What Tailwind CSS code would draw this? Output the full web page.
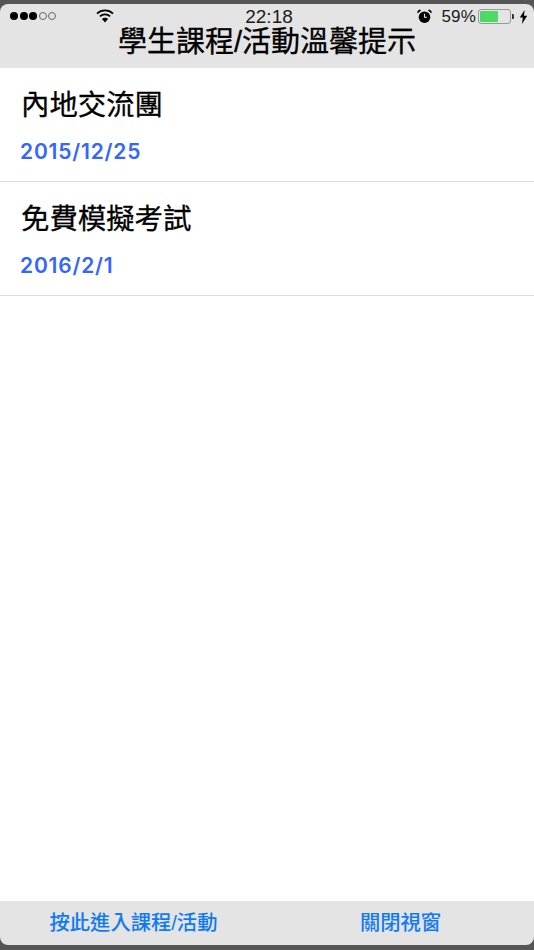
<!DOCTYPE html>
<html lang="zh-Hant">
<head>
<meta charset="utf-8">
<script src="https://cdn.jsdelivr.net/npm/@tailwindcss/browser@4"></script>
</head>
<body class="m-0">
<div class="w-[534px] h-[950px] bg-[#555555] flex flex-col pt-[4px] pb-[5px] overflow-hidden font-['Liberation_Sans','Noto_Sans_CJK_TC',sans-serif] text-black">
  <header class="h-[64px] bg-[#e4e4e4] rounded-t-[8px] flex flex-col shrink-0">
    <div class="h-[20px] grid grid-cols-3 items-center pl-[10px] pr-[6px] text-[17px] text-[#1a1a1a] shrink-0">
      <div class="flex items-center gap-[40px]">
        <div class="flex items-center gap-[1.5px] -mt-[1px]">
          <span class="w-[8px] h-[8px] rounded-full bg-black"></span>
          <span class="w-[8px] h-[8px] rounded-full bg-black"></span>
          <span class="w-[8px] h-[8px] rounded-full bg-black"></span>
          <span class="w-[8px] h-[8px] rounded-full border border-[#666]"></span>
          <span class="w-[8px] h-[8px] rounded-full border border-[#666]"></span>
        </div>
        <svg width="18" height="14" viewBox="0 0 18 14" fill="none" stroke="#000" stroke-width="1.8" class="-mt-[2px]">
          <path d="M1 4.6a11.5 11.5 0 0 1 16 0"/>
          <path d="M3.9 7.4a7.4 7.4 0 0 1 10.2 0"/>
          <path d="M9 13.5 5.9 10.1a4.4 4.4 0 0 1 6.2 0z" fill="#000" stroke="none"/>
        </svg>
      </div>
      <div class="text-center text-[19px] leading-[20px]">22:18</div>
      <div class="flex items-center justify-end gap-[4px]">
        <svg width="15" height="15" viewBox="0 0 15 15" class="mr-[5px] -mt-[1px]">
          <circle cx="7.5" cy="8.2" r="5.8" fill="#000"/>
          <path d="M.6 4.4 4.2 1.2 2.4.5.4 2.3zM14.4 4.4 10.8 1.2 12.6.5 14.6 2.3z" fill="#000"/>
          <path d="M7.5 4.8V8.3H10" fill="none" stroke="#e4e4e4" stroke-width="1.1"/>
        </svg>
        <span class="tracking-[0.2px]">59%</span>
        <div class="flex items-center gap-[1px] -ml-[2px]">
          <div class="w-[33px] h-[15px] border border-[#999] rounded-[3px] p-[1px]">
            <div class="w-[18px] h-full bg-[#4cd964] rounded-[1px]"></div>
          </div>
          <span class="w-[2px] h-[5px] bg-[#333] rounded-r-[1px]"></span>
        </div>
        <svg width="9" height="14" viewBox="0 0 9 14" class="ml-[1px]">
          <path d="M5.6 0 .8 7.6h3L3 14l5.2-8.2H5z" fill="#000"/>
        </svg>
      </div>
    </div>
    <h1 class="text-[29px] leading-[36px] text-center font-normal [-webkit-text-stroke:0.3px_#000]">學生課程/活動溫馨提示</h1>
  </header>
  <main class="flex-1 bg-white">
    <section class="h-[114px] border-b border-[#dddddd] pl-[21px] pt-[20px]">
      <h2 class="text-[28.4px] leading-[34px] font-normal [-webkit-text-stroke:0.3px_#000]">內地交流團</h2>
      <p class="mt-[17px] -ml-[1px] font-['Inter',sans-serif] text-[21px] leading-[26px] font-semibold tracking-[0.8px] text-[#3366ff]">2015/12/25</p>
    </section>
    <section class="h-[114px] border-b border-[#dddddd] pl-[21px] pt-[20px]">
      <h2 class="text-[28.4px] leading-[34px] font-normal [-webkit-text-stroke:0.3px_#000]">免費模擬考試</h2>
      <p class="mt-[17px] -ml-[1px] font-['Inter',sans-serif] text-[21px] leading-[26px] font-semibold tracking-[0.8px] text-[#3366ff]">2016/2/1</p>
    </section>
  </main>
  <footer class="h-[44px] bg-[#e4e4e4] rounded-b-[8px] grid grid-cols-2 items-center text-[20.3px] font-medium text-[#0f7af5] text-center shrink-0">
    <span>按此進入課程/活動</span>
    <span>關閉視窗</span>
  </footer>
</div>
</body>
</html>
